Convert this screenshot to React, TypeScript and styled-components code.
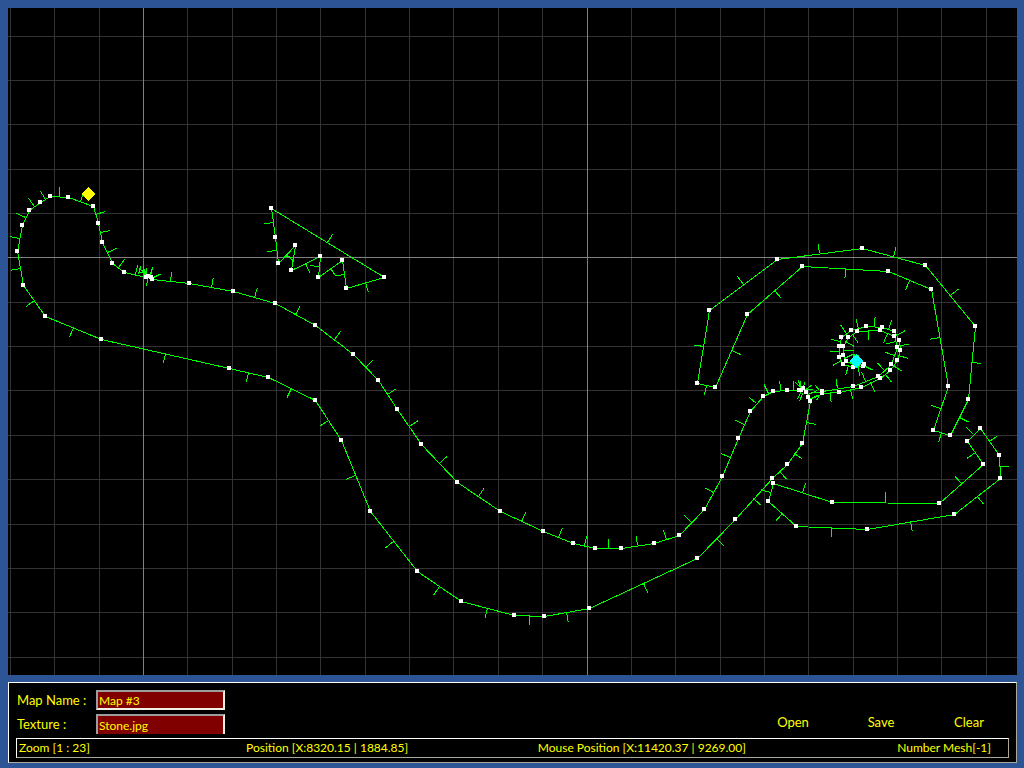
import React from "react";
import styled, { createGlobalStyle } from "styled-components";

type Point = [number, number];
type Segment = [number, number, number, number];

const GlobalStyle = createGlobalStyle`
  *, *::before, *::after { box-sizing: border-box; }
  body {
    margin: 0;
    background: #2d5596;
    color: #ffff00;
    font-family: "Comic Sans MS", Lato, "Liberation Sans", sans-serif;
  }
`;

const Editor = styled.main`
  display: flex;
  flex-direction: column;
  gap: 7px;
  min-height: 100vh;
  padding: 8px 7px 5px 8px;
`;

const MapView = styled.section`
  flex: 1 1 0;
  display: flex;
  min-height: 0;
  overflow: hidden;
  background: #000;
`;

const Drawing = styled.svg`
  flex: 1;
  display: block;
  width: 100%;
  height: auto;
  min-height: 0;
  shape-rendering: crispEdges;
`;

const Panel = styled.section`
  display: flex;
  flex-direction: column;
  gap: 4px;
  padding: 7px 0 4px;
  background: #000;
  border: 1px solid;
  border-color: #fff #aca899 #aca899 #fff;
`;

const Controls = styled.div`
  display: flex;
  justify-content: space-between;
  align-items: flex-end;
  padding: 0 3px 0 8px;
`;

const Fields = styled.div`
  display: grid;
  grid-template-columns: 79px 129px;
  row-gap: 4px;
`;

const Label = styled.label`
  font-size: 13px;
  line-height: 20px;
`;

const Field = styled.input<{ $open?: boolean }>`
  width: 100%;
  height: 20px;
  padding: 0 1px;
  color: inherit;
  font-family: inherit;
  font-size: 12px;
  background: #800000;
  border: 2px solid;
  border-color: #9d9da1 #f1efe2 #f1efe2 #9d9da1;
  border-bottom-width: ${(p) => (p.$open ? 0 : 2)}px;
  border-radius: 0;
  outline: none;
`;

const Actions = styled.div`
  display: flex;
`;

const Action = styled.button`
  width: 88px;
  height: 24px;
  padding: 0;
  color: inherit;
  font-family: inherit;
  font-size: 13px;
  line-height: 24px;
  text-align: center;
  background: transparent;
  border: 0;
`;

const Status = styled.footer`
  display: grid;
  grid-template-columns: 228fr 293fr 361fr 90fr;
  margin: 0 7px;
  padding: 0 17px 0 2px;
  font-size: 12px;
  line-height: 18px;
  white-space: nowrap;
  border: 1px solid;
  border-color: #fff #aca899 #aca899 #fff;
`;

const columns = [
  10, 54, 99, 143, 187, 232, 276, 320, 365, 409, 453, 498, 542, 587, 631, 675,
  720, 764, 808, 853, 897, 941, 986,
];
const rows = [36, 80, 124, 169, 213, 257, 302, 346, 390, 435, 479, 524, 568, 612, 657];
const majorColumns = [143, 587];
const majorRows = [257];

const river: Point[] = [
  [17, 251], [22, 225], [29, 210], [40, 202], [50, 196], [68, 197], [93, 206],
  [98, 223], [102, 242], [112, 263], [124, 272], [146, 277], [148, 276],
  [151, 277], [152, 279], [189, 283], [233, 291],
  [275, 303], [315, 325], [353, 354], [378, 380], [397, 409], [421, 444],
  [457, 482], [500, 511], [543, 531], [573, 543], [595, 548], [621, 548],
  [654, 543], [679, 535], [704, 509], [722, 476], [738, 438], [750, 411],
  [763, 396], [773, 391], [787, 390], [799, 390], [801, 390],
  [803, 388], [806, 392], [808, 397], [810, 401], [802, 443],
  [787, 464], [772, 478], [735, 519], [697, 558], [589, 608], [544, 616],
  [514, 615], [461, 601], [417, 571], [370, 511], [341, 440], [315, 400],
  [268, 377], [229, 368], [101, 339], [45, 316], [23, 285],
];

const spiral: Point[] = [
  [822, 391], [853, 386], [878, 376], [891, 364], [897, 347], [894, 336],
  [880, 330], [857, 331], [848, 337], [843, 346], [843, 355], [846, 361],
  [855, 365], [864, 364], [863, 366], [853, 367], [843, 364], [839, 357],
  [839, 346], [841, 337], [851, 330], [866, 326], [882, 327], [894, 331],
  [899, 340], [900, 350], [897, 360], [890, 370], [880, 378], [861, 387],
  [839, 392], [822, 393],
];

const teeth: Point[] = [
  [271, 208], [384, 277], [346, 288], [342, 260], [318, 277], [320, 256],
  [291, 270], [295, 245], [278, 263], [275, 237],
];

const arch: Point[] = [
  [777, 259], [862, 248], [925, 265], [975, 326], [968, 399], [950, 435],
  [933, 430], [948, 386], [931, 289], [888, 271], [802, 266], [747, 314],
  [715, 387], [697, 383], [709, 310],
];

const hook: Point[] = [
  [773, 483], [832, 502], [939, 503], [983, 464], [967, 441], [980, 428],
  [999, 455], [1000, 478], [954, 514], [867, 529], [796, 526], [768, 501],
];

const meshes = [river, spiral, teeth, arch, hook];

/* Normals of the tiny edges bunched up at the two river joints. */
const jointNormals: Segment[] = [
  [138, 274, 140, 266], [139, 268, 145, 273], [139, 272, 146, 272],
  [144, 275, 143, 268], [146, 276, 146, 267], [145, 276, 144, 270],
  [150, 275, 152, 267], [147, 279, 146, 286],
  [798, 380, 800, 388], [804, 382, 803, 388], [797, 399, 800, 392],
  [799, 401, 802, 393], [804, 389, 812, 389], [807, 394, 815, 391],
  [815, 385, 819, 390], [816, 400, 819, 395], [814, 397, 819, 395],
];

const NORMAL = 10;

/* Outline of a closed mesh plus the outward normal at the middle of each edge. */
function meshPath(points: Point[]) {
  let d = "";
  points.forEach(([x1, y1], i) => {
    const [x2, y2] = points[(i + 1) % points.length];
    const dx = x2 - x1;
    const dy = y2 - y1;
    const length = Math.hypot(dx, dy);
    const mx = Math.floor((x1 + x2) / 2) + 0.5;
    const my = Math.floor((y1 + y2) / 2) + 0.5;
    d += `M${x1 + 0.5} ${y1 + 0.5}L${x2 + 0.5} ${y2 + 0.5}`;
    d += `M${mx} ${my}l${(dy / length) * NORMAL} ${(-dx / length) * NORMAL}`;
  });
  return d;
}

function Mesh({ points }: { points: Point[] }) {
  return (
    <g>
      <path d={meshPath(points)} fill="none" stroke="#00ff00" />
      {points.map(([x, y], i) => (
        <rect key={i} x={x - 2} y={y - 2} width="4" height="4" fill="#fff" />
      ))}
    </g>
  );
}

function Marker({ x, y, color }: { x: number; y: number; color: string }) {
  return <path d={`M${x} ${y - 7}l7 7l-7 7l-7 -7z`} fill={color} />;
}

function GridLines({ xs, ys, color }: { xs: number[]; ys: number[]; color: string }) {
  return (
    <g fill={color}>
      {xs.map((x) => (
        <rect key={`x${x}`} x={x} y="8" width="1" height="667" />
      ))}
      {ys.map((y) => (
        <rect key={`y${y}`} x="8" y={y} width="1009" height="1" />
      ))}
    </g>
  );
}

export default function App() {
  return (
    <>
      <GlobalStyle />
      <Editor>
        <MapView>
          <Drawing
            viewBox="8 8 1009 667"
            preserveAspectRatio="xMidYMid slice"
            role="img"
            aria-label="Map"
          >
            <GridLines xs={columns} ys={rows} color="#333" />
            <GridLines xs={majorColumns} ys={majorRows} color="#808080" />
            <path
              d={jointNormals
                .map(([x1, y1, x2, y2]) => `M${x1 + 0.5} ${y1 + 0.5}L${x2 + 0.5} ${y2 + 0.5}`)
                .join("")}
              stroke="#00ff00"
            />
            {meshes.map((points, i) => (
              <Mesh key={i} points={points} />
            ))}
            <Marker x={88} y={194} color="#ffff00" />
            <Marker x={856} y={361} color="#00ffff" />
          </Drawing>
        </MapView>
        <Panel>
          <Controls>
            <Fields>
              <Label htmlFor="map-name">Map Name :</Label>
              <Field id="map-name" defaultValue="Map #3" />
              <Label htmlFor="texture">Texture :</Label>
              <Field id="texture" defaultValue="Stone.jpg" $open />
            </Fields>
            <Actions>
              <Action type="button">Open</Action>
              <Action type="button">Save</Action>
              <Action type="button">Clear</Action>
            </Actions>
          </Controls>
          <Status>
            <span>Zoom [1 : 23]</span>
            <span>Position [X:8320.15 | 1884.85]</span>
            <span>Mouse Position [X:11420.37 | 9269.00]</span>
            <span>Number Mesh[-1]</span>
          </Status>
        </Panel>
      </Editor>
    </>
  );
}
